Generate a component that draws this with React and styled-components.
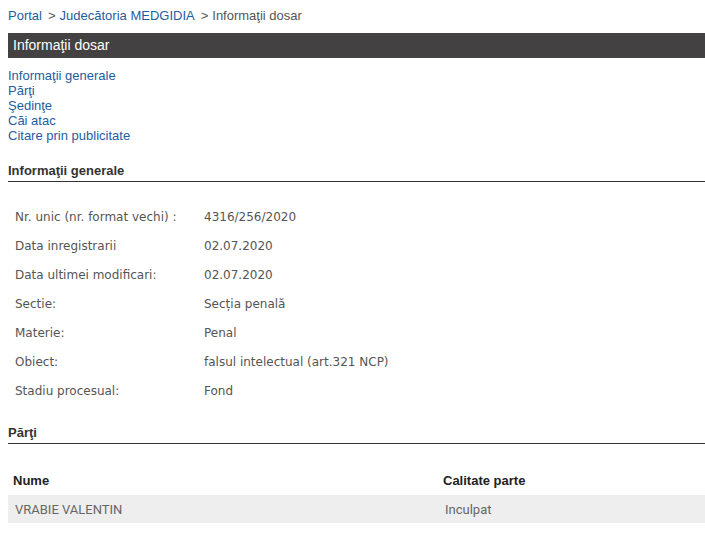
import React from "react";
import styled, { createGlobalStyle } from "styled-components";

const Global = createGlobalStyle`
  html, body { margin: 0; padding: 0; background: #fff; overflow: hidden; }
  body { padding: 0 0 0 8px; font-family: "Liberation Sans", Arial, sans-serif; }
`;

const Page = styled.div`
  width: 697px;
  padding-top: 8px;
`;

const Breadcrumb = styled.div`
  font-size: 13px;
  line-height: 16px;
  color: #555;
  display: flex;
`;

const Link = styled.a`
  color: #1f5d9e;
  text-decoration: none;
  cursor: pointer;
`;

const Sep = styled.span`
  color: #555;
  padding: 0 ${(p) => p.$right || 5}px 0 ${(p) => p.$left || 5}px;
`;

const TitleBar = styled.div`
  margin-top: 9px;
  height: 25px;
  background: #434142;
  color: #fff;
  font-size: 14px;
  line-height: 25px;
  padding-left: 5px;
`;

const Nav = styled.div`
  margin-top: 10px;
  display: flex;
  flex-direction: column;
  font-size: 13px;
  line-height: 15px;
`;

const SectionTitle = styled.div`
  margin-top: ${(p) => p.$top}px;
  font-size: 13px;
  font-weight: bold;
  color: #333;
  line-height: 16px;
  padding-bottom: 2px;
  border-bottom: 1px solid #333;
`;

const InfoTable = styled.div`
  margin-top: 20px;
  display: grid;
  grid-template-columns: 196px 1fr;
  grid-auto-rows: 29px;
  font-family: "DejaVu Sans", Verdana, sans-serif;
  font-size: 12px;
  color: #555;
`;

const Cell = styled.div`
  display: flex;
  align-items: center;
  padding-left: ${(p) => p.$pad}px;
`;

const PartyTable = styled.div`
  margin-top: 21px;
  display: flex;
  flex-direction: column;
`;

const PartyRow = styled.div`
  display: grid;
  grid-template-columns: 434px 1fr;
  height: ${(p) => (p.$head ? 30 : 28)}px;
  align-items: center;
  background: ${(p) => (p.$head ? "transparent" : "#eeeeee")};
  font-family: ${(p) => (p.$head ? '"Liberation Sans", Arial, sans-serif' : 'Roboto, "Liberation Sans", sans-serif')};
  font-size: 13px;
  font-weight: ${(p) => (p.$head ? "bold" : "normal")};
  color: ${(p) => (p.$head ? "#222" : "#666")};
`;

const PartyCell = styled.div`
  padding-left: ${(p) => p.$pad}px;
`;

const info = [
  ["Nr. unic (nr. format vechi) :", "4316/256/2020"],
  ["Data inregistrarii", "02.07.2020"],
  ["Data ultimei modificari:", "02.07.2020"],
  ["Sectie:", "Secția penală"],
  ["Materie:", "Penal"],
  ["Obiect:", "falsul intelectual (art.321 NCP)"],
  ["Stadiu procesual:", "Fond"],
];

export default function App() {
  return (
    <>
      <Global />
      <Page>
        <Breadcrumb>
          <Link>Portal</Link>
          <Sep $left={6} $right={4}>&gt;</Sep>
          <Link>Judecătoria MEDGIDIA</Link>
          <Sep $left={6} $right={4}>&gt;</Sep>
          <span>Informaţii dosar</span>
        </Breadcrumb>
        <TitleBar>Informaţii dosar</TitleBar>
        <Nav>
          <Link>Informaţii generale</Link>
          <Link>Părţi</Link>
          <Link>Şedinţe</Link>
          <Link>Căi atac</Link>
          <Link>Citare prin publicitate</Link>
        </Nav>
        <SectionTitle $top={20}>Informaţii generale</SectionTitle>
        <InfoTable>
          {info.map(([k, v]) => (
            <React.Fragment key={k}>
              <Cell $pad={7}>{k}</Cell>
              <Cell $pad={0}>{v}</Cell>
            </React.Fragment>
          ))}
        </InfoTable>
        <SectionTitle $top={20}>Părţi</SectionTitle>
        <PartyTable>
          <PartyRow $head>
            <PartyCell $pad={5}>Nume</PartyCell>
            <PartyCell $pad={1}>Calitate parte</PartyCell>
          </PartyRow>
          <PartyRow>
            <PartyCell $pad={7}>VRABIE VALENTIN</PartyCell>
            <PartyCell $pad={3}>Inculpat</PartyCell>
          </PartyRow>
        </PartyTable>
      </Page>
    </>
  );
}
